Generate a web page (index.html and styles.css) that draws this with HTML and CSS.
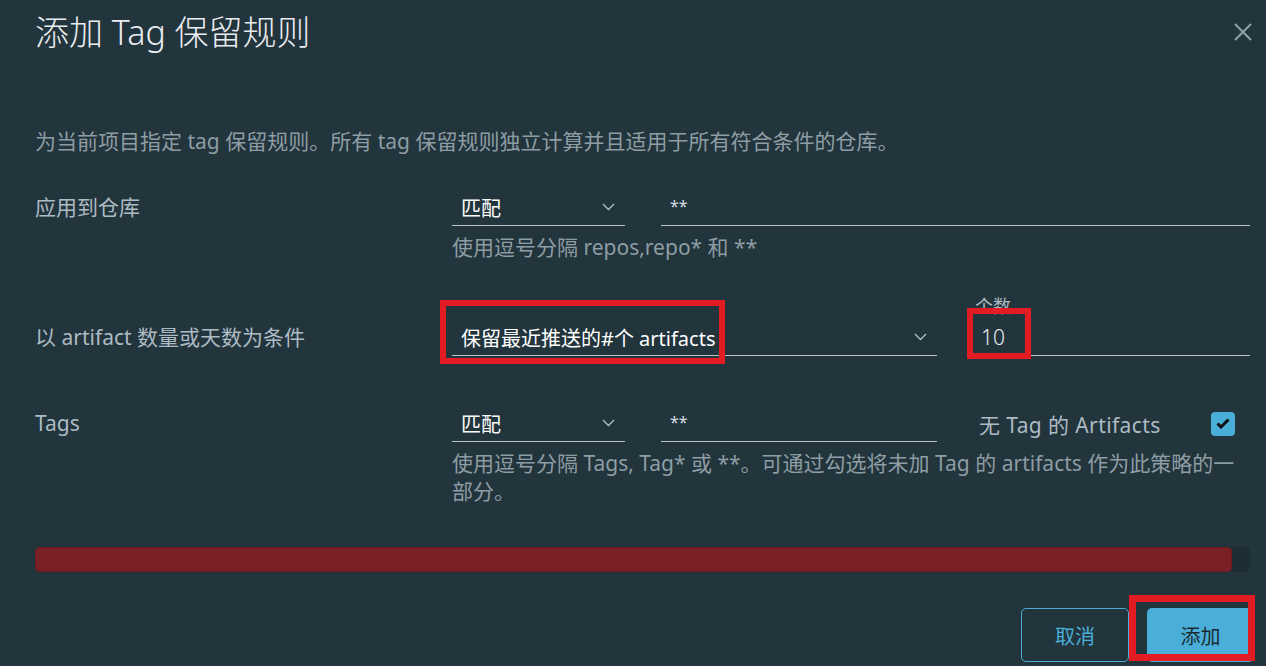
FILE: index.html
```html
<!DOCTYPE html>
<html lang="zh-CN">
    <head>
        <meta charset="UTF-8">
        <meta name="viewport" content="width=device-width, initial-scale=1.0">
        <title>添加 Tag 保留规则</title>
        <link rel="stylesheet" href="styles.css">
    </head>
    <body>
        <div class="modal">
            <header class="modal-header">
                <h1 class="modal-title">添加 Tag 保留规则</h1>
                <button class="close-btn" aria-label="关闭">
                    <svg width="18" height="18" viewBox="0 0 18 18">
                        <path d="M1 1 L17 17 M17 1 L1 17" stroke="#8fa1a9" stroke-width="2" fill="none"/>
                    </svg>
                </button>
            </header>

            <p class="modal-desc">为当前项目指定 tag 保留规则。所有 tag 保留规则独立计算并且适用于所有符合条件的仓库。</p>

            <form class="rule-form">
                <!-- 仓库 -->
                <div class="form-row row-repo">
                    <label class="row-label">应用到仓库</label>
                    <div class="row-body">
                        <div class="controls controls-repo">
                            <div class="select">
                                <span>匹配</span>
                                <svg class="chevron" width="13" height="8" viewBox="0 0 13 8"><polyline points="1,1 6.5,6.5 12,1" fill="none" stroke="#b3c0c7" stroke-width="1.3"/></svg>
                            </div>
                            <div class="text-input">**</div>
                        </div>
                        <p class="helper">使用逗号分隔 repos,repo* 和 **</p>
                    </div>
                </div>

                <!-- 数量 -->
                <div class="form-row row-count">
                    <label class="row-label">以 artifact 数量或天数为条件</label>
                    <div class="row-body">
                        <div class="controls controls-count">
                            <div class="select select-wide">
                                <span>保留最近推送的#个 artifacts</span>
                                <svg class="chevron" width="13" height="8" viewBox="0 0 13 8"><polyline points="1,1 6.5,6.5 12,1" fill="none" stroke="#b3c0c7" stroke-width="1.3"/></svg>
                                <div class="mark mark-select"></div>
                            </div>
                            <div class="text-input count-input">
                                <span class="float-label">个数</span>
                                10
                                <div class="mark mark-count"></div>
                            </div>
                        </div>
                    </div>
                </div>

                <!-- Tags -->
                <div class="form-row row-tags">
                    <label class="row-label">Tags</label>
                    <div class="row-body">
                        <div class="controls controls-tags">
                            <div class="select">
                                <span>匹配</span>
                                <svg class="chevron" width="13" height="8" viewBox="0 0 13 8"><polyline points="1,1 6.5,6.5 12,1" fill="none" stroke="#b3c0c7" stroke-width="1.3"/></svg>
                            </div>
                            <div class="text-input">**</div>
                            <div class="check-field">
                                <span>无 Tag 的 Artifacts</span>
                                <span class="checkbox">
                                    <svg width="14" height="11" viewBox="0 0 14 11"><polyline points="1.5,5.5 5,9 12.5,1.5" fill="none" stroke="#111" stroke-width="3"/></svg>
                                </span>
                            </div>
                        </div>
                        <p class="helper">使用逗号分隔 Tags, Tag* 或 **。可通过勾选将未加 Tag 的 artifacts 作为此策略的一部分。</p>
                    </div>
                </div>
            </form>

            <div class="progress">
                <div class="progress-fill" style="width: 98.5%"></div>
            </div>

            <footer class="modal-footer">
                <button class="btn btn-outline">取消</button>
                <button class="btn btn-primary">添加<span class="mark mark-submit"></span></button>
            </footer>
        </div>
    </body>
</html>
```

FILE: styles.css
```css
* {
    box-sizing: border-box;
}
body {
    margin: 0;
    background-color: #22343c;
    font-family: "Noto Sans", "Noto Sans CJK SC", sans-serif;
    color: #adbbc4;
    overflow: hidden;
}
.modal {
    padding: 12px 16px 0 35px;
    height: 666px;
}
.modal-header {
    display: flex;
    align-items: center;
    justify-content: space-between;
    height: 40px;
}
.modal-title {
    margin: 0;
    font-size: 34px;
    font-weight: 300;
    line-height: 40px;
    color: #e9ecef;
}
.close-btn {
    background: none;
    border: none;
    padding: 0;
    width: 18px;
    height: 18px;
    margin-right: -2px;
    cursor: pointer;
}
.modal-desc {
    margin: 75px 0 0;
    font-size: 21px;
    line-height: 28px;
    color: #8e9da4;
}
.form-row {
    display: grid;
    grid-template-columns: 417px 1fr;
}
.row-repo {
    margin-top: 34px;
}
.row-count {
    margin-top: 58px;
}
.row-tags {
    margin-top: 49px;
}
.row-label {
    font-size: 21px;
    line-height: 36px;
    color: #adbbc4;
}
.controls {
    display: grid;
    align-items: end;
}
.controls-repo {
    grid-template-columns: 173px 1fr;
    column-gap: 36px;
}
.controls-count {
    grid-template-columns: 485px 1fr;
    column-gap: 30px;
}
.controls-tags {
    grid-template-columns: 173px 276px 1fr;
    column-gap: 36px;
}
.select {
    position: relative;
    display: flex;
    align-items: center;
    justify-content: space-between;
    height: 37px;
    padding: 0 10px 0 9px;
    border-bottom: 1px solid #b8c4ca;
    font-size: 20px;
    color: #ffffff;
}
.text-input {
    position: relative;
    height: 37px;
    line-height: 34px;
    padding-left: 9px;
    border-bottom: 1px solid #b8c4ca;
    font-size: 16px;
    color: #d5dde1;
}
.count-input {
    padding-left: 14px;
    line-height: 36px;
    font-size: 21px;
    font-weight: 300;
    color: #e9ecef;
}
.float-label {
    position: absolute;
    left: 8px;
    top: -24px;
    font-size: 18px;
    line-height: 22px;
    font-weight: 400;
    color: #adbbc4;
}
.check-field {
    display: flex;
    align-items: center;
    justify-content: space-between;
    height: 37px;
    padding: 0 15px 0 6px;
    font-size: 21px;
    letter-spacing: 0.4px;
    color: #adbbc4;
}
.checkbox {
    display: flex;
    align-items: center;
    justify-content: center;
    width: 24px;
    height: 24px;
    border-radius: 4px;
    background-color: #49afd9;
}
.helper {
    margin: 7px 0 0;
    font-size: 21px;
    line-height: 28px;
    color: #8e9da4;
}
.progress {
    margin-top: 42px;
    height: 25px;
    background-color: #1d2d34;
    border-radius: 5px;
}
.progress-fill {
    height: 100%;
    background-color: #7b2027;
    border-radius: 5px;
    box-shadow: inset 0 0 0 1px #6d1b21;
}
.modal-footer {
    display: flex;
    justify-content: flex-end;
    gap: 18px;
    margin-top: 36px;
    margin-right: -4px;
}
.btn {
    position: relative;
    width: 108px;
    height: 54px;
    border-radius: 5px;
    font-family: inherit;
    font-size: 20px;
    cursor: pointer;
}
.btn-outline {
    background: transparent;
    border: 1.5px solid #49afd9;
    color: #49afd9;
}
.btn-primary {
    width: 107px;
    background-color: #49afd9;
    border: none;
    color: #1b2a32;
}
.mark {
    position: absolute;
    border: 6px solid #e31b23;
    pointer-events: none;
    z-index: 2;
}
.mark-select {
    left: -12px;
    top: -19px;
    width: 285px;
    height: 64px;
}
.mark-count {
    left: 0;
    top: -11px;
    width: 64px;
    height: 51px;
}
.mark-submit {
    left: -18px;
    top: -13px;
    width: 126px;
    height: 66px;
    border-width: 7px;
}
```
